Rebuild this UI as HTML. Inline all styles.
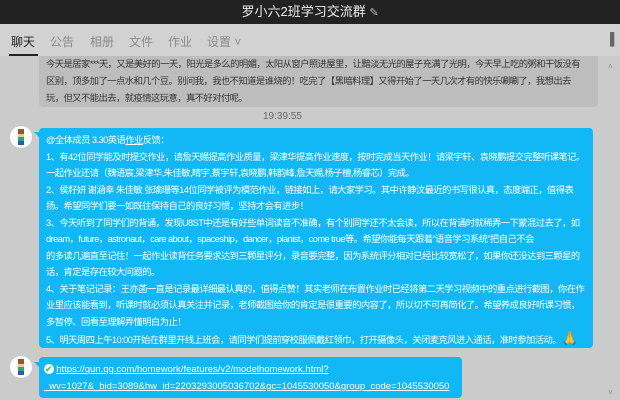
<!DOCTYPE html>
<html><head><meta charset="utf-8"><style>
*{margin:0;padding:0;box-sizing:border-box}
body{width:620px;height:400px;overflow:hidden;background:#cbcbcb;font-family:"Liberation Sans","Noto Sans CJK SC",sans-serif;position:relative}
.title{position:absolute;left:0;top:0;width:620px;height:24px;background:#222;color:#eee;font-size:13px;text-align:center;line-height:24px}
.tabs{position:absolute;left:0;top:24px;width:620px;height:32px;background:#d2d2d2}
.tabs span{position:absolute;top:9px;font-size:12px;color:#8a8a8a}
.tabs .on{color:#222}
.ul{position:absolute;left:9px;top:30px;width:29px;height:2px;background:#222}
.b{position:absolute;font-size:9.3px;letter-spacing:-0.55px;white-space:nowrap;line-height:16.5px;overflow:hidden}
.grey{left:39px;top:56px;width:559px;height:51px;background:#bdbdbd;color:#333;border-radius:0 0 4px 4px;padding:0 7px;line-height:17px}
.blue{left:39px;top:128px;width:554px;height:220px;background:#12b7f5;color:#fff;border-radius:4px;padding:4px 7px}
.link{left:39px;top:357px;width:423px;height:41px;background:#12b7f5;color:#fff;border-radius:4px;padding:4px 5px;line-height:17px;font-size:9.5px;letter-spacing:0}
.link a{color:#fff;text-decoration:underline}
.av{position:absolute;left:10px;width:22px;height:22px;border-radius:50%;background:#fff}
.av:after{content:"";position:absolute;left:8px;top:3px;width:6px;height:16px;background:linear-gradient(#8a5a2a 0 30%,#f0c8a0 30% 50%,#2a7 50% 75%,#35a 75%)}
.tail{position:absolute;left:34px;width:0;height:0;border-top:5px solid #12b7f5;border-left:5px solid transparent}
.ts{position:absolute;left:263px;top:111px;font-size:10px;color:#666}
</style></head><body>
<div class="title">罗小六2班学习交流群 <span style="font-size:11px;color:#bbb">✎</span></div>
<div class="tabs">
<span class="on" style="left:11px">聊天</span><span style="left:50px">公告</span><span style="left:90px">相册</span><span style="left:129px">文件</span><span style="left:168px">作业</span><span style="left:207px">设置 ˅</span>
<div class="ul"></div>
<span style="left:610px;top:8px;color:#666">▌</span>
</div>
<div class="b grey">今天是居家***天，又是美好的一天，阳光是多么的明媚，太阳从窗户照进屋里，让黯淡无光的屋子充满了光明，今天早上吃的粥和干饭没有<br>区别，顶多加了一点水和几个豆。别问我，我也不知道是谁烧的！吃完了【黑暗料理】又得开始了一天几次才有的快乐唰唰了，我想出去<br>玩，但又不能出去，就疫情这玩意，真不好对付呢。</div>
<div style="position:absolute;left:608px;top:62px;font-size:8px;color:#888">˄</div>
<div class="ts">19:39:55</div>
<div class="av" style="top:126px"></div><div class="tail" style="top:132px"></div>
<div class="b blue">@全体成员 3.30英语<u>作业</u>反馈：<br>1、有42位同学能及时提交作业，请詹天赐提高作业质量，梁津华提高作业速度，按时完成当天作业！请梁宇轩、袁晓鹏提交完整听课笔记。<br>一起作业还请（魏语宸,梁津华,朱佳敏,睛宇,蔡宇轩,袁晓鹏,韩韵峰,詹天赐,杨子檀,杨睿芯）完成。<br>2、侯籽妍 谢涵幸 朱佳敏 张瑜珊等14位同学被评为模范作业，链接如上，请大家学习。其中许静汶最近的书写很认真，态度端正，值得表<br>扬。希望同学们要一如既往保持自己的良好习惯，坚持才会有进步！<br>3、今天听到了同学们的背诵，发现U8ST中还是有好些单词读音不准确，有个别同学还不太会读，所以在背诵时就稀弄一下蒙混过去了，如<br>dream，future，astronaut，care about，spaceship，dancer，pianist，come true等。希望你能每天跟着“语音学习系统”把自己不会<br>的多读几遍直至记住！一起作业读背任务要求达到三颗星评分，录音要完整，因为系统评分相对已经比较宽松了，如果你还没达到三颗星的<br>话，肯定是存在较大问题的。<br>4、关于笔记记录：王亦菡一直是记录最详细最认真的，值得点赞！其实老师在布置作业时已经将第二天学习视频中的重点进行截图，你在作<br>业里应该能看到，听课时就必须认真关注并记录，老师截图给你的肯定是很重要的内容了，所以切不可再简化了。希望养成良好听课习惯，<br>多暂停、回看至理解弄懂明白为止！<br>5、明天周四上午10:00开始在群里开线上班会，请同学们提前穿校服佩戴红领巾，打开摄像头，关闭麦克风进入通话，准时参加活动。<span style="font-size:14px">🙏</span></div>
<div class="av" style="top:356px"></div><div class="tail" style="top:362px"></div>
<div class="b link"><span style="color:#1c3;background:#fff;border-radius:50%;font-size:9px;padding:0 1px">✔</span> <a>https://qun.qq.com/homework/features/v2/modelhomework.html?</a><br><a>_wv=1027&amp;_bid=3089&amp;hw_id=2203293005036702&amp;gc=1045530050&amp;group_code=1045530050</a></div>
<div style="position:absolute;left:608px;top:388px;font-size:8px;color:#888">˅</div>
</body></html>
